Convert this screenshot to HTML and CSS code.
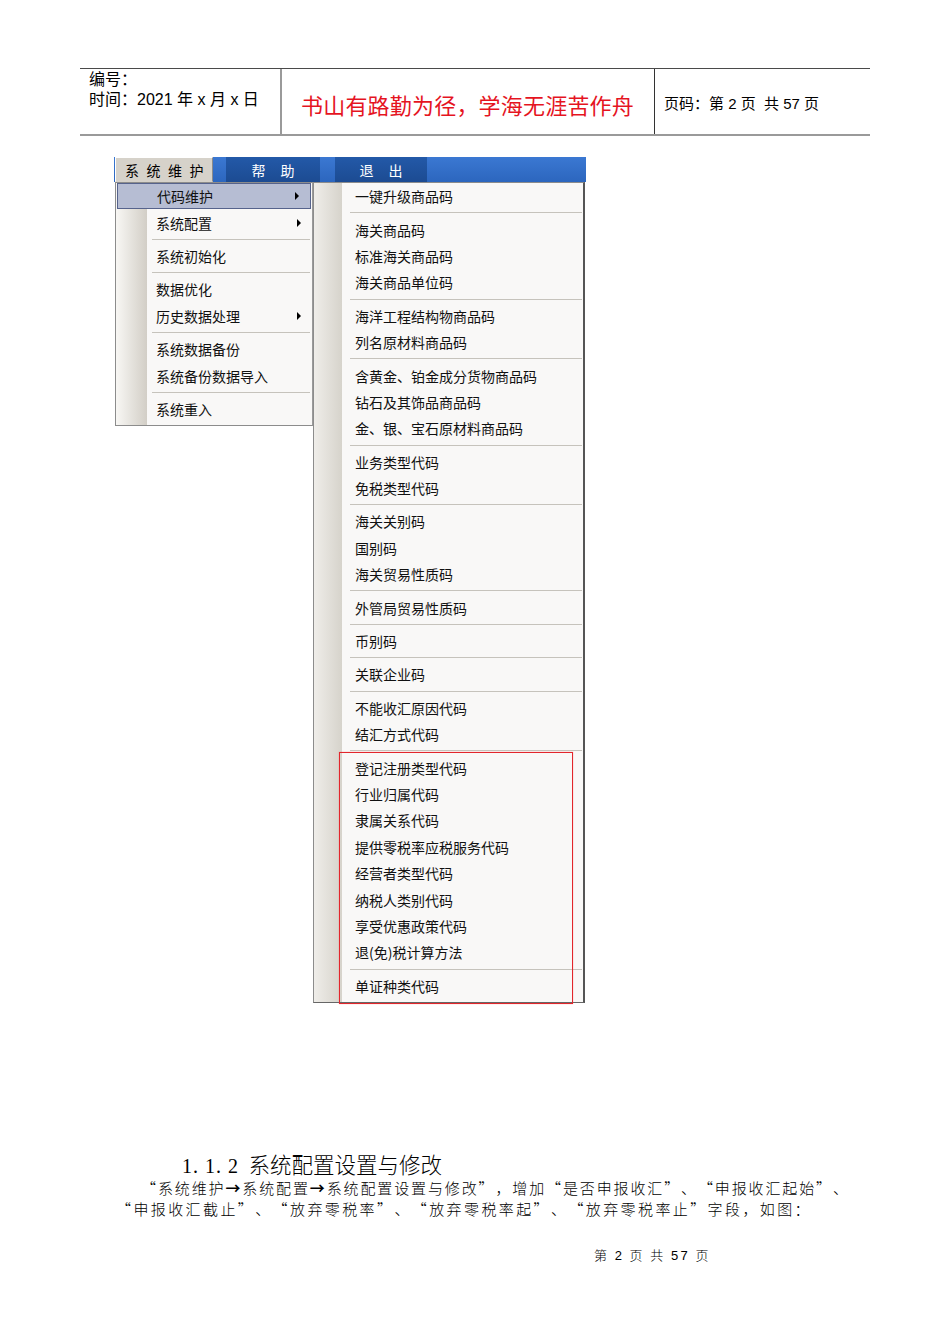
FILE: index.html
```html
<!DOCTYPE html>
<html lang="zh-CN">
<head>
<meta charset="utf-8">
<title>系统配置设置与修改</title>
<link rel="stylesheet" href="styles.css">
</head>
<body>
<div class="page">
  <header class="hdr">
    <div class="hcell h-left">
      <div>编号：</div>
      <div>时间：2021 年 x 月 x 日</div>
    </div>
    <div class="hcell h-mid">书山有路勤为径，学海无涯苦作舟</div>
    <div class="hcell h-right">页码：第 2 页&nbsp;&nbsp;共 57 页</div>
  </header>

  <div class="shot">
    <div class="menubar">
      <div class="mb-item mb-active">系统维护</div>
      <div class="mb-item mb-dark mb-help">帮助</div>
      <div class="mb-item mb-dark mb-exit">退出</div>
    </div>
    <div class="menus">
      <div class="dropdown dd-left">
        <div class="mi hl">代码维护<span class="arrow"></span></div>
        <div class="mi">系统配置<span class="arrow"></span></div>
        <div class="sep"></div>
        <div class="mi">系统初始化</div>
        <div class="sep"></div>
        <div class="mi">数据优化</div>
        <div class="mi">历史数据处理<span class="arrow"></span></div>
        <div class="sep"></div>
        <div class="mi">系统数据备份</div>
        <div class="mi">系统备份数据导入</div>
        <div class="sep"></div>
        <div class="mi">系统重入</div>
      </div>
      <div class="dropdown dd-sub">
        <div class="mi">一键升级商品码</div>
        <div class="sep"></div>
        <div class="mi">海关商品码</div>
        <div class="mi">标准海关商品码</div>
        <div class="mi">海关商品单位码</div>
        <div class="sep"></div>
        <div class="mi">海洋工程结构物商品码</div>
        <div class="mi">列名原材料商品码</div>
        <div class="sep"></div>
        <div class="mi">含黄金、铂金成分货物商品码</div>
        <div class="mi">钻石及其饰品商品码</div>
        <div class="mi">金、银、宝石原材料商品码</div>
        <div class="sep"></div>
        <div class="mi">业务类型代码</div>
        <div class="mi">免税类型代码</div>
        <div class="sep"></div>
        <div class="mi">海关关别码</div>
        <div class="mi">国别码</div>
        <div class="mi">海关贸易性质码</div>
        <div class="sep"></div>
        <div class="mi">外管局贸易性质码</div>
        <div class="sep"></div>
        <div class="mi">币别码</div>
        <div class="sep"></div>
        <div class="mi">关联企业码</div>
        <div class="sep"></div>
        <div class="mi">不能收汇原因代码</div>
        <div class="mi">结汇方式代码</div>
        <div class="sep"></div>
        <div class="mi">登记注册类型代码</div>
        <div class="mi">行业归属代码</div>
        <div class="mi">隶属关系代码</div>
        <div class="mi">提供零税率应税服务代码</div>
        <div class="mi">经营者类型代码</div>
        <div class="mi">纳税人类别代码</div>
        <div class="mi">享受优惠政策代码</div>
        <div class="mi">退(免)税计算方法</div>
        <div class="sep"></div>
        <div class="mi">单证种类代码</div>
      </div>
    </div>
    <div class="redbox"></div>
  </div>

  <h2 class="sec-title"><span class="num">1. 1. 2</span>&nbsp;&nbsp;系统配置设置与修改</h2>
  <div class="para l1">“系统维护<b class="arr">→</b>系统配置<b class="arr">→</b>系统配置设置与修改”，增加“是否申报收汇”、“申报收汇起始”、</div>
  <div class="para l2">“申报收汇截止”、“放弃零税率”、“放弃零税率起”、“放弃零税率止”字段，如图：</div>

  <div class="footer">第 <span class="fnum">2</span> 页 共 <span class="fnum">57</span> 页</div>
</div>
</body>
</html>
```

FILE: styles.css
```css
html, body {
  margin: 0;
  padding: 0;
  background: #ffffff;
}

.page {
  width: 950px;
  min-height: 1344px;
  padding-top: 68px;
  box-sizing: border-box;
  font-family: "Liberation Sans", "Noto Sans CJK SC", sans-serif;
  color: #000;
  text-spacing-trim: space-all;
}

/* ---------- page header ---------- */
.hdr {
  display: flex;
  margin-left: 80px;
  width: 790px;
  height: 68px;
  box-sizing: border-box;
  border-top: 1px solid #4a4a4a;
  border-bottom: 2px solid #9a9a9a;
}

.hcell {
  box-sizing: border-box;
}

.h-left {
  width: 202px;
  border-right: 2px solid #9a9a9a;
  padding: 1px 0 0 9px;
  font-size: 16px;
  line-height: 20px;
}

.h-mid {
  width: 373px;
  border-right: 1px solid #333;
  display: flex;
  align-items: center;
  padding: 5px 0 0 19px;
  font-family: "Noto Sans CJK SC", sans-serif;
  font-size: 22px;
  color: #e5141f;
  letter-spacing: 0.2px;
}

.h-right {
  flex: 1;
  display: flex;
  align-items: center;
  padding: 2px 0 0 9px;
  font-size: 15px;
}

/* ---------- screenshot of the application ---------- */
.shot {
  position: relative;
  width: 472px;
  margin-left: 114px;
  margin-top: 21px;
  font-family: "Noto Sans CJK SC", sans-serif;
  font-size: 14px;
}

.menubar {
  display: flex;
  height: 25px;
  background: linear-gradient(#3b78d2, #2c66be);
  padding-left: 1px;
  box-sizing: border-box;
}

.mb-item {
  display: flex;
  align-items: center;
  box-sizing: border-box;
  font-size: 14px;
}

.mb-active {
  width: 98px;
  background: #d6d2ca;
  padding-left: 9px;
  letter-spacing: 7.5px;
  border: 1px solid;
  border-color: #ffffff #8a8a8a #d6d2ca #ffffff;
  color: #000;
}

.mb-dark {
  justify-content: center;
  background: linear-gradient(#2359a8, #1c4b92);
  color: #fff;
  letter-spacing: 15px;
  padding-left: 15px;
}

.mb-help {
  width: 94px;
  margin-left: 13px;
}

.mb-exit {
  width: 92px;
  margin-left: 15px;
}

.menus {
  display: flex;
  align-items: flex-start;
}

.dropdown {
  box-sizing: border-box;
  background-color: #f9f8f7;
  background-repeat: no-repeat;
  padding: 0 0 2px;
}

.dd-left {
  width: 198px;
  margin-left: 1px;
  border: 1px solid #8c8c8c;
  border-right-color: #9a9a9a;
  background-image: linear-gradient(to right, #f8f7f4, #d2cec6);
  background-size: 31px 100%;
  background-position: 0 0;
  padding-bottom: 3px;
}

.dd-sub {
  width: 272px;
  border: 1px solid #8c8c8c;
  border-right: 2px solid #555;
  border-bottom-color: #666;
  background-image: linear-gradient(to right, #efede9, #d6d3cb);
  background-size: 28px 100%;
  background-position: 0 0;
  padding-bottom: 3px;
}

.mi {
  position: relative;
  height: 26.4px;
  display: flex;
  align-items: center;
  box-sizing: border-box;
  white-space: nowrap;
  color: #111;
}

.dd-left .mi {
  padding-left: 40px;
}

.dd-sub .mi {
  padding-left: 41px;
}

.dd-left .mi.hl {
  margin: 0 1px;
  padding-left: 39px;
  background: #b6bdd3;
  border: 1px solid #56638c;
}

.arrow {
  position: absolute;
  right: 11px;
  top: 50%;
  margin-top: -4px;
  width: 0;
  height: 0;
  border-left: 4px solid #000;
  border-top: 4px solid transparent;
  border-bottom: 4px solid transparent;
}

.sep {
  height: 1px;
  background: #c6c3bc;
  margin: 3px 2px 3px 36px;
}

.dd-sub .sep {
  margin-right: 1px;
}

.redbox {
  position: absolute;
  left: 225px;
  top: 595px;
  width: 234px;
  height: 252px;
  box-sizing: border-box;
  border: 1.5px solid #e2262c;
  box-shadow: 0 0 1px rgba(255, 60, 60, 0.5);
  pointer-events: none;
}

/* ---------- document text ---------- */
.sec-title {
  margin: 150px 0 0 182px;
  font-family: "Noto Sans CJK SC", sans-serif;
  font-weight: 300;
  font-size: 21.5px;
  line-height: 21px;
  white-space: nowrap;
}

.sec-title .num {
  font-family: "Liberation Serif", serif;
  font-size: 20px;
  letter-spacing: 1px;
}

.para {
  font-family: "Noto Sans CJK SC", sans-serif;
  font-weight: 300;
  font-size: 15px;
  line-height: 21px;
  white-space: nowrap;
  text-spacing-trim: space-all;
  font-feature-settings: "halt" 0, "palt" 0, "chws" 0;
}

.para .arr {
  font-weight: 700;
  letter-spacing: 0;
}

.l1 {
  margin-left: 141px;
  width: 707px;
  text-align: justify;
  text-align-last: justify;
}

.l2 {
  margin-left: 116px;
  letter-spacing: 2.4px;
}

.footer {
  margin: 27px 0 0 594px;
  font-family: "Noto Sans CJK SC", sans-serif;
  font-weight: 300;
  font-size: 13px;
  line-height: 18px;
  letter-spacing: 2.4px;
}

.footer .fnum {
  font-family: "Liberation Sans", sans-serif;
}
```
